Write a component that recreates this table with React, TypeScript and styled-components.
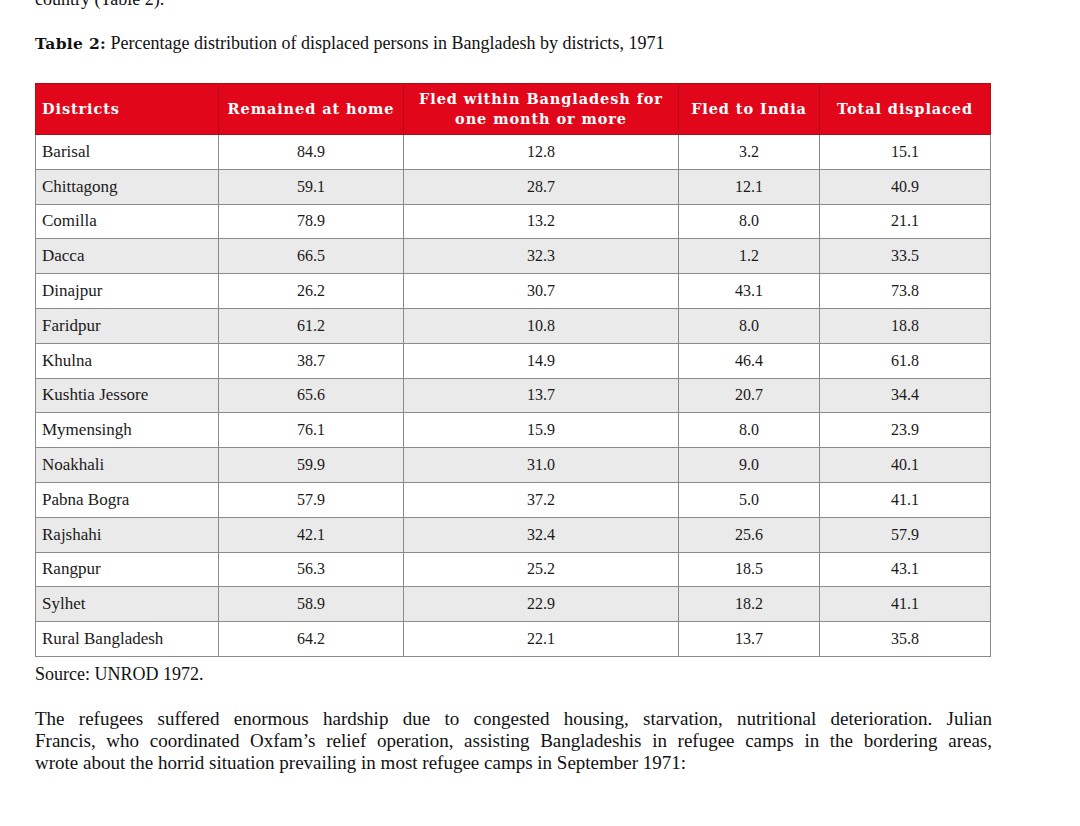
import styled, { createGlobalStyle } from 'styled-components';

const GlobalStyle = createGlobalStyle`
  body {
    margin: 0;
    background: #ffffff;
    font-family: "Liberation Serif", "DejaVu Serif", serif;
    color: #111111;
  }
`;

const Page = styled.div`
  width: 965px;
  padding: 0 0 0 35px;
  overflow: hidden;
  height: 826px;
`;

const CutLine = styled.p`
  margin: -12px 0 0;
  font-size: 18px;
  line-height: 22px;
`;

const Caption = styled.p`
  margin: 22px 0 0;
  font-size: 18px;
  line-height: 22px;

  & b {
    font-family: "DejaVu Serif", serif;
    font-size: 15.5px;
    letter-spacing: 0.3px;
  }
`;

const Table = styled.table`
  margin-top: 28px;
  width: 955px;
  border-collapse: collapse;
  table-layout: fixed;
  font-size: 16px;
`;

const HeadCell = styled.th<{ $left?: boolean }>`
  height: 50px;
  padding: 0 6px;
  background: #e2061a;
  color: #ffffff;
  border: 1px solid #a8101c;
  font-family: "DejaVu Serif", serif;
  font-weight: 700;
  font-size: 14.5px;
  letter-spacing: 0.9px;
  line-height: 20px;
  text-align: ${(p) => (p.$left ? 'left' : 'center')};
`;

const Row = styled.tr<{ $shade: boolean }>`
  background: ${(p) => (p.$shade ? '#eaeaea' : '#ffffff')};
`;

const Cell = styled.td<{ $left?: boolean }>`
  height: 33.8px;
  padding: 0 6px;
  border: 1px solid #8a8a8a;
  text-align: ${(p) => (p.$left ? 'left' : 'center')};
  font-size: ${(p) => (p.$left ? '17px' : '16px')};
  color: #1a1a1a;
`;

const Source = styled.p`
  margin: 6px 0 0;
  font-size: 18px;
  line-height: 22px;
`;

const Para = styled.div`
  margin-top: 23px;
  width: 957px;
  font-size: 19px;
  line-height: 22px;
`;

const Line = styled.div<{ $last?: boolean }>`
  text-align: ${(p) => (p.$last ? 'left' : 'justify')};
  text-align-last: ${(p) => (p.$last ? 'left' : 'justify')};
  white-space: nowrap;
`;

const rows: [string, string, string, string, string][] = [
  ['Barisal', '84.9', '12.8', '3.2', '15.1'],
  ['Chittagong', '59.1', '28.7', '12.1', '40.9'],
  ['Comilla', '78.9', '13.2', '8.0', '21.1'],
  ['Dacca', '66.5', '32.3', '1.2', '33.5'],
  ['Dinajpur', '26.2', '30.7', '43.1', '73.8'],
  ['Faridpur', '61.2', '10.8', '8.0', '18.8'],
  ['Khulna', '38.7', '14.9', '46.4', '61.8'],
  ['Kushtia Jessore', '65.6', '13.7', '20.7', '34.4'],
  ['Mymensingh', '76.1', '15.9', '8.0', '23.9'],
  ['Noakhali', '59.9', '31.0', '9.0', '40.1'],
  ['Pabna Bogra', '57.9', '37.2', '5.0', '41.1'],
  ['Rajshahi', '42.1', '32.4', '25.6', '57.9'],
  ['Rangpur', '56.3', '25.2', '18.5', '43.1'],
  ['Sylhet', '58.9', '22.9', '18.2', '41.1'],
  ['Rural Bangladesh', '64.2', '22.1', '13.7', '35.8'],
];

export default function App() {
  return (
    <>
      <GlobalStyle />
      <Page>
        <CutLine>country (Table 2).</CutLine>
        <Caption>
          <b>Table 2:</b> Percentage distribution of displaced persons in Bangladesh by districts, 1971
        </Caption>
        <Table>
          <colgroup>
            <col style={{ width: 183 }} />
            <col style={{ width: 185 }} />
            <col style={{ width: 275 }} />
            <col style={{ width: 141 }} />
            <col style={{ width: 171 }} />
          </colgroup>
          <thead>
            <tr>
              <HeadCell $left>Districts</HeadCell>
              <HeadCell>Remained at home</HeadCell>
              <HeadCell>
                Fled within Bangladesh for
                <br />
                one month or more
              </HeadCell>
              <HeadCell>Fled to India</HeadCell>
              <HeadCell>Total displaced</HeadCell>
            </tr>
          </thead>
          <tbody>
            {rows.map((r, i) => (
              <Row key={r[0]} $shade={i % 2 === 1}>
                <Cell $left>{r[0]}</Cell>
                <Cell>{r[1]}</Cell>
                <Cell>{r[2]}</Cell>
                <Cell>{r[3]}</Cell>
                <Cell>{r[4]}</Cell>
              </Row>
            ))}
          </tbody>
        </Table>
        <Source>Source: UNROD 1972.</Source>
        <Para>
          <Line>
            The refugees suffered enormous hardship due to congested housing, starvation, nutritional deterioration. Julian
          </Line>
          <Line>
            Francis, who coordinated Oxfam’s relief operation, assisting Bangladeshis in refugee camps in the bordering areas,
          </Line>
          <Line $last>wrote about the horrid situation prevailing in most refugee camps in September 1971:</Line>
        </Para>
      </Page>
    </>
  );
}
